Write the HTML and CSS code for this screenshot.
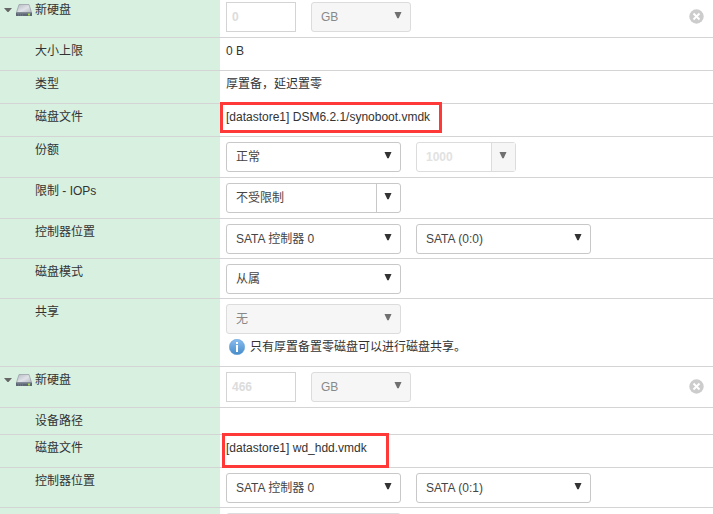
FILE: index.html
```html
<!DOCTYPE html>
<html lang="zh-CN">
<head>
<meta charset="utf-8">
<title>虚拟硬件</title>
<link rel="stylesheet" href="styles.css">
</head>
<body>
<svg class="defs" width="0" height="0">
  <defs>
    <linearGradient id="metal" x1="0" y1="0" x2="1" y2="1"><stop offset="0" stop-color="#b4b9c1"/><stop offset=".55" stop-color="#dfe2e7"/><stop offset="1" stop-color="#b4b9c1"/></linearGradient>
    <linearGradient id="blue" x1="0" y1="0" x2="0" y2="1"><stop offset="0" stop-color="#8abdf0"/><stop offset="1" stop-color="#468bc8"/></linearGradient>
    <symbol id="disk" viewBox="0 0 16 13"><path d="M3 .5h10L15.500 8.500H.5z" fill="url(#metal)" stroke="#959ba5" stroke-width=".7"/><path d="M0 8.500h16V12H0z" fill="#5d6674"/><path d="M1 9h14" stroke="#838b96"/><path d="M2 11h1M4 11h1M6 11h1" stroke="#7d8691"/><path d="M12 9.500h2v2h-2z" fill="#a6dc48"/></symbol>
    <symbol id="close" viewBox="0 0 15 15"><circle cx="7.500" cy="7.500" r="7.200" fill="#ccc"/><path d="M4.500 4.500l6 6M10.500 4.500l-6 6" stroke="#fff" stroke-width="1.900"/></symbol>
    <symbol id="info" viewBox="0 0 16 16"><circle cx="8" cy="8" r="7.700" fill="url(#blue)" stroke="#5b9bd5" stroke-width=".5"/><path d="M7 3h2v2H7zM7 6h2v7H7z" fill="#fff"/></symbol>
    <symbol id="arrow" viewBox="0 0 8 7"><path d="M.5 0h7L4.700 6.300H3.300z" fill="currentColor"/></symbol>
  </defs>
</svg>
<main class="settings">
  <section class="row first">
    <div class="label device"><svg class="twisty" viewBox="0 0 8 5"><path d="M0 0h8L4.500 4h-1z" fill="#666"/></svg><svg class="disk"><use href="#disk"/></svg><span>新硬盘</span></div>
    <div class="value"><div class="box number">0</div><div class="box select small disabled"><span>GB</span><svg class="arrow"><use href="#arrow"/></svg></div><svg class="close"><use href="#close"/></svg></div>
  </section>
  <section class="row text"><div class="label">大小上限</div><div class="value">0 B</div></section>
  <section class="row text"><div class="label">类型</div><div class="value">厚置备，延迟置零</div></section>
  <section class="row text"><div class="label">磁盘文件</div><div class="value">[datastore1] DSM6.2.1/synoboot.vmdk<i class="mark mark-boot"></i></div></section>
  <section class="row tall">
    <div class="label">份额</div>
    <div class="value"><div class="box select"><span>正常</span><svg class="arrow"><use href="#arrow"/></svg></div><div class="box combo small faded"><span>1000</span><b class="trigger"><svg class="arrow"><use href="#arrow"/></svg></b></div></div>
  </section>
  <section class="row tall">
    <div class="label">限制 - IOPs</div>
    <div class="value"><div class="box combo"><span>不受限制</span><b class="trigger"><svg class="arrow"><use href="#arrow"/></svg></b></div></div>
  </section>
  <section class="row">
    <div class="label">控制器位置</div>
    <div class="value"><div class="box select"><span>SATA 控制器 0</span><svg class="arrow"><use href="#arrow"/></svg></div><div class="box select"><span>SATA (0:0)</span><svg class="arrow"><use href="#arrow"/></svg></div></div>
  </section>
  <section class="row">
    <div class="label">磁盘模式</div>
    <div class="value"><div class="box select"><span>从属</span><svg class="arrow"><use href="#arrow"/></svg></div></div>
  </section>
  <section class="row sharing">
    <div class="label">共享</div>
    <div class="value"><div class="box select disabled"><span>无</span><svg class="arrow"><use href="#arrow"/></svg></div><div class="note"><svg class="info"><use href="#info"/></svg><span>只有厚置备置零磁盘可以进行磁盘共享。</span></div></div>
  </section>
  <section class="row tall">
    <div class="label device"><svg class="twisty" viewBox="0 0 8 5"><path d="M0 0h8L4.500 4h-1z" fill="#666"/></svg><svg class="disk"><use href="#disk"/></svg><span>新硬盘</span></div>
    <div class="value"><div class="box number">466</div><div class="box select small disabled"><span>GB</span><svg class="arrow"><use href="#arrow"/></svg></div><svg class="close"><use href="#close"/></svg></div>
  </section>
  <section class="row path"><div class="label">设备路径</div><div class="value"></div></section>
  <section class="row text"><div class="label">磁盘文件</div><div class="value">[datastore1] wd_hdd.vmdk<i class="mark mark-data"></i></div></section>
  <section class="row">
    <div class="label">控制器位置</div>
    <div class="value"><div class="box select"><span>SATA 控制器 0</span><svg class="arrow"><use href="#arrow"/></svg></div><div class="box select"><span>SATA (0:1)</span><svg class="arrow"><use href="#arrow"/></svg></div></div>
  </section>
  <section class="row">
    <div class="label"></div>
    <div class="value"><div class="box select disabled"></div></div>
  </section>
</main>
</body>
</html>
```
FILE: styles.css
```css
* { box-sizing: border-box; }
html, body { margin: 0; height: 514px; overflow: hidden; }
body { background: #fff; color: #333; font: 12px/18px "Liberation Sans", "Noto Sans CJK SC", sans-serif; }
svg { display: block; flex: none; }
.defs { position: absolute; }
.settings { height: 514px; overflow: hidden; }
.row { display: grid; grid-template-columns: 220px 1fr; height: 40px; border-bottom: 1px solid #d4d4d4; }
.row.tall { height: 41px; }
.row.text { height: 33px; }
.row.path { height: 27px; }
.row.sharing { height: 68px; }
.row.first { height: 38px; }
.label { background: #d8f0e0; padding: 4px 0 0 35px; white-space: nowrap; }
.device { display: flex; padding-left: 4px; }
.twisty { width: 8px; height: 5px; margin: 7px 4px 0 0; }
.disk { width: 16px; height: 13px; margin: 3px 3px 0 0; }
.value { display: flex; flex-wrap: wrap; align-content: flex-start; gap: 0 15px; padding: 5px 9px 0 6px; white-space: nowrap; }
.first .label { padding-top: 1px; }
.first .value { padding-top: 2px; }
.text .value { display: block; position: relative; padding-top: 4px; }
.box { display: flex; width: 175px; height: 30px; border: 1px solid #c8c8c8; border-radius: 3px; color: #454545; line-height: 28px; padding-left: 9px; background: #fff; }
.small { width: 100px; }
.number { width: 70px; border-color: #d4d4d4; border-radius: 0; color: #dcdcdc; padding-left: 5px; font-weight: bold; }
.select, .combo { justify-content: space-between; }
.arrow { width: 8px; height: 7px; margin: 9px 8px 0 0; color: #333; }
.disabled { background: #f6f6f6; border-color: #dcdcdc; color: #888; }
.disabled .arrow, .faded .arrow { color: #707070; }
.trigger { width: 24px; border-left: 1px solid #c8c8c8; padding-left: 7px; }
.faded { border-color: #dcdcdc; color: #e2e2e2; font-weight: bold; }
.faded .trigger { border-color: #dcdcdc; background: #f6f6f6; }
.close { width: 15px; height: 15px; margin: 7px 0 0 auto; }
.note { display: flex; width: 100%; height: 18px; padding-left: 3px; margin-top: 4px; }
.info { width: 16px; height: 16px; margin: 1px 5px 0 0; }
.mark { position: absolute; border: 3px solid #ff3838; top: -2px; }
.mark-boot { left: 0; width: 222px; height: 31px; }
.mark-data { left: 2px; width: 167px; height: 35px; }
```
